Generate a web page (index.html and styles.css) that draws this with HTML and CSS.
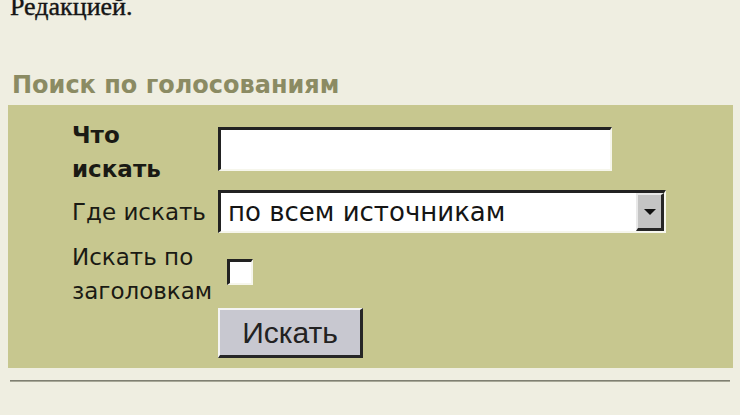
FILE: index.html
```html
<!DOCTYPE html>
<html lang="ru">
<head>
<meta charset="utf-8">
<title>Поиск по голосованиям</title>
<link rel="stylesheet" href="styles.css">
</head>
<body>
<p class="intro">Редакцией.</p>
<h2 class="title">Поиск по голосованиям</h2>
<form class="panel">
  <div class="row row-what">
    <label class="label label-bold" for="q">Что<br>искать</label>
    <input class="text-input" id="q" type="text">
  </div>
  <div class="row row-where">
    <label class="label" for="src">Где искать</label>
    <div class="select-box">
      <select class="select" id="src">
        <option>по всем источникам</option>
      </select>
      <span class="select-arrow"><span class="tri"></span></span>
    </div>
  </div>
  <div class="row row-titles">
    <label class="label" for="t">Искать по<br>заголовкам</label>
    <input class="check" id="t" type="checkbox">
  </div>
  <div class="row row-submit">
    <button class="btn" type="button">Искать</button>
  </div>
</form>
<div class="rule"></div>
</body>
</html>
```

FILE: styles.css
```css
html, body {
  margin: 0;
  padding: 0;
}
body {
  background: #efeee1;
  width: 740px;
  height: 415px;
  overflow: hidden;
}
.intro {
  margin: 0;
  padding-left: 10px;
  height: 13px;
  line-height: 13px;
  font-family: "Liberation Serif", serif;
  font-size: 26px;
  color: #151515;
  -webkit-text-stroke: 0.4px #151515;
}
.title {
  margin: 57px 0 5px 0;
  padding-left: 12px;
  height: 30px;
  line-height: 30px;
  font-family: "DejaVu Sans", sans-serif;
  font-weight: bold;
  font-size: 24px;
  color: #8b8b63;
}
.panel {
  margin: 0 7px 0 8px;
  background: #c7c78f;
  padding: 13px 0 10px 64px;
  display: flex;
  flex-direction: column;
  font-family: "DejaVu Sans", sans-serif;
  font-size: 23px;
  color: #1a1a14;
}
.row {
  display: flex;
  align-items: flex-start;
}
.label {
  width: 146px;
  flex: none;
  line-height: 34px;
}
.label-bold {
  font-weight: bold;
}
.text-input {
  margin: 9px 0 0 0;
  width: 394px;
  height: 44px;
  box-sizing: border-box;
  border-style: solid;
  border-width: 3px 2px 2px 3px;
  border-color: #222 #f6f6ec #f6f6ec #222;
  background: #fff;
  padding: 0 6px;
  font: inherit;
  outline: none;
}
.row-where {
  margin-top: 4px;
  align-items: center;
  height: 43px;
}
.select-box {
  display: flex;
  width: 448px;
  height: 43px;
  box-sizing: border-box;
  border-style: solid;
  border-width: 3px 2px 2px 3px;
  border-color: #222 #f6f6ec #f6f6ec #222;
  background: #fff;
}
.select {
  flex: 1;
  min-width: 0;
  -webkit-appearance: none;
  appearance: none;
  border: 0;
  background: transparent;
  padding: 0 0 0 7px;
  margin: 0;
  font-family: "DejaVu Sans", sans-serif;
  font-size: 26px;
  color: #151515;
  outline: none;
}
.select-arrow {
  flex: none;
  width: 28px;
  box-sizing: border-box;
  border-style: solid;
  border-width: 2px 3px 3px 2px;
  border-color: #e8e8e8 #262626 #262626 #e8e8e8;
  background: #c4c4c4;
  display: flex;
  align-items: center;
  justify-content: center;
}
.tri {
  width: 0;
  height: 0;
  border-left: 6px solid transparent;
  border-right: 6px solid transparent;
  border-top: 6px solid #111;
}
.row-titles {
  margin-top: 7px;
}
.check {
  -webkit-appearance: none;
  appearance: none;
  margin: 19px 0 0 9px;
  width: 26px;
  height: 26px;
  box-sizing: border-box;
  border-style: solid;
  border-width: 3px 2px 2px 3px;
  border-color: #222 #f6f6ec #f6f6ec #222;
  background: #fff;
}
.row-submit {
  padding-left: 146px;
}
.btn {
  width: 145px;
  height: 50px;
  box-sizing: border-box;
  margin: 0;
  padding: 0;
  border-style: solid;
  border-width: 2px 3px 3px 2px;
  border-color: #f4f4f4 #262626 #262626 #f4f4f4;
  background: #c8c8d0;
  font-family: "Liberation Sans", sans-serif;
  font-size: 30px;
  color: #222;
}
.rule {
  margin: 12px 10px 0 10px;
  height: 0;
  border-top: 1px solid #7f7f72;
  border-bottom: 1px solid #a8a898;
}
```
